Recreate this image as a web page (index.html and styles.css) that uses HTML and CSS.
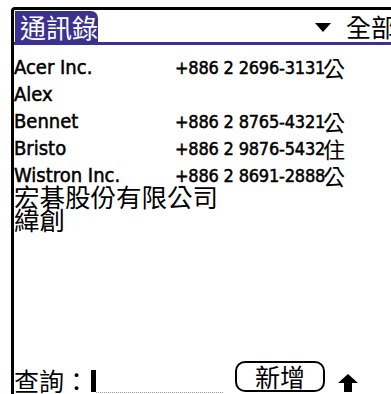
FILE: index.html
```html
<!DOCTYPE html>
<html>
<head>
<meta charset="utf-8">
<link rel="stylesheet" href="styles.css">
</head>
<body>
<div class="frame">
  <div class="header">
    <div class="tab">通訊錄</div>
    <div class="picker">
      <svg class="tri" width="16" height="9" viewBox="0 0 16 9"><polygon points="0,0 16,0 8,9" fill="#000"/></svg>
      <span class="cat">全部</span>
    </div>
  </div>
  <div class="rule"></div>
  <div class="list">
    <div class="row"><span class="name">Acer Inc.</span><span class="phone">+886 2 2696-3131</span><span class="tag">公</span></div>
    <div class="row"><span class="name">Alex</span><span class="phone"></span><span class="tag"></span></div>
    <div class="row"><span class="name">Bennet</span><span class="phone">+886 2 8765-4321</span><span class="tag">公</span></div>
    <div class="row"><span class="name">Bristo</span><span class="phone">+886 2 9876-5432</span><span class="tag">住</span></div>
    <div class="row"><span class="name">Wistron Inc.</span><span class="phone">+886 2 8691-2888</span><span class="tag">公</span></div>
    <div class="cjk-group">
      <div class="row cjk"><span class="name">宏碁股份有限公司</span></div>
      <div class="row cjk"><span class="name">緯創</span></div>
    </div>
  </div>
  <div class="bottom">
    <span class="label">查詢：</span>
    <span class="cursor"></span>
    <span class="field"></span>
    <span class="btn">新增</span>
    <svg class="arrow" width="20" height="18" viewBox="0 0 20 18"><polygon points="10,0 20,9 14,9 14,18 6,18 6,9 0,9" fill="#000"/></svg>
  </div>
</div>
</body>
</html>
```
FILE: styles.css
```css
html, body {
  margin: 0;
  padding: 0;
  background: #fff;
  width: 391px;
  height: 394px;
  overflow: hidden;
}
.frame {
  margin: 7px 0 0 11px;
  height: 387px;
  border-top: 3px solid #000;
  border-left: 3px solid #000;
  border-top-left-radius: 4px;
  box-sizing: border-box;
  display: flex;
  flex-direction: column;
  font-family: "DejaVu Sans Condensed", "DejaVu Sans", sans-serif;
  color: #000;
}
.header {
  display: flex;
  align-items: flex-end;
  height: 32px;
  white-space: nowrap;
}
.tab {
  width: 90px;
  height: 31px;
  margin-left: 1px;
  background: #3b318f;
  border-top-right-radius: 7px;
  color: #fff;
  font-family: "Noto Sans CJK TC", sans-serif;
  font-size: 26px;
  line-height: 31px;
  padding-left: 5px;
  box-sizing: border-box;
}
.picker {
  display: flex;
  align-items: center;
  margin-left: 217px;
  height: 31px;
}
.tri {
  display: block;
  margin-top: 2px;
}
.cat {
  margin-left: 15px;
  font-family: "Noto Sans CJK TC", sans-serif;
  font-size: 25px;
  line-height: 31px;
}
.rule {
  height: 3px;
  background: #3b318f;
}
.list {
  padding-top: 9px;
}
.row {
  display: grid;
  grid-template-columns: 161px 148px auto;
  height: 27px;
  line-height: 27px;
  white-space: nowrap;
}
.name {
  font-size: 20px;
  -webkit-text-stroke: 0.5px #000;
}
.phone {
  font-size: 18px;
  letter-spacing: -0.2px;
  -webkit-text-stroke: 0.5px #000;
}
.tag {
  font-family: "Noto Sans CJK TC", sans-serif;
  font-size: 22px;
}
.cjk-group {
  margin-top: -5px;
}
.row.cjk {
  display: block;
  height: 23px;
  line-height: 23px;
}
.row.cjk .name {
  font-family: "Noto Sans CJK TC", sans-serif;
  font-size: 25.5px;
  -webkit-text-stroke: 0;
}
.bottom {
  margin-top: auto;
  display: flex;
  align-items: flex-end;
  height: 34px;
  white-space: nowrap;
}
.label {
  font-family: "Noto Sans CJK TC", sans-serif;
  font-size: 25px;
  line-height: 27px;
}
.cursor {
  width: 5px;
  height: 22px;
  background: #000;
  margin-left: 2px;
  margin-bottom: 2px;
}
.field {
  width: 127px;
  border-bottom: 1px dotted #999;
  margin-bottom: 1px;
}
.btn {
  margin-left: 12px;
  width: 90px;
  height: 31px;
  border: 2px solid #000;
  border-radius: 10px;
  box-sizing: border-box;
  text-align: center;
  font-family: "Noto Sans CJK TC", sans-serif;
  font-size: 25px;
  line-height: 26px;
  margin-bottom: 2px;
}
.arrow {
  display: block;
  margin-left: 13px;
  margin-bottom: 2px;
}
```
